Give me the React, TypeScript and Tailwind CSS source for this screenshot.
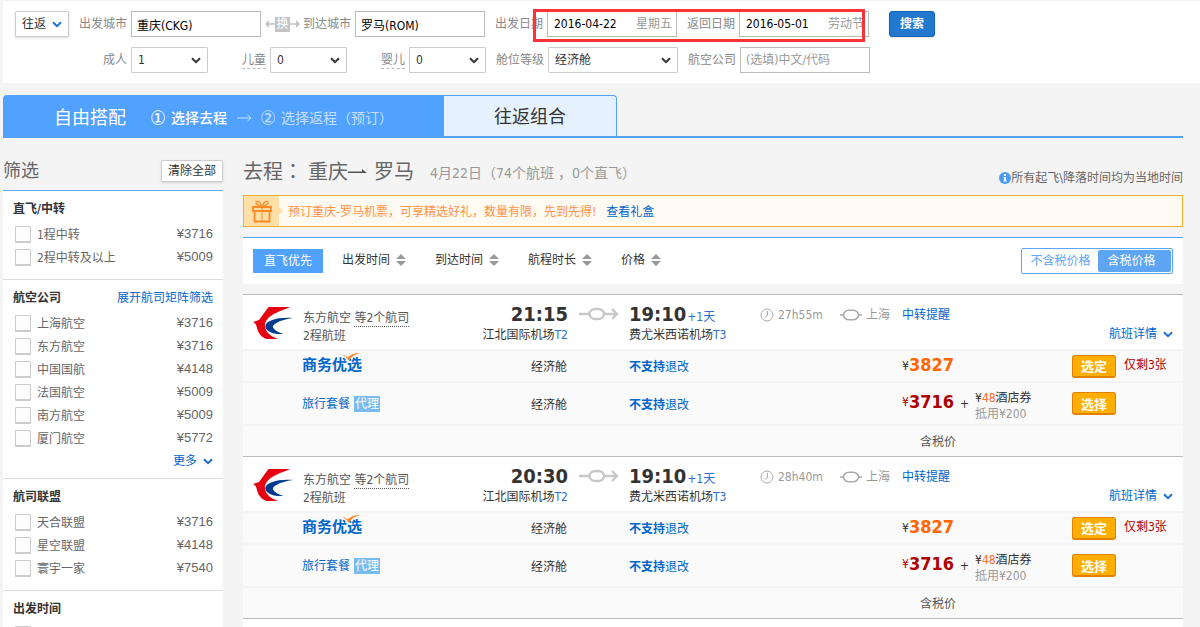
import { useState } from "react";
import type { ReactNode } from "react";

type FilterItem = { name: string; price: string };

type Flight = { id: string; depart: string; duration: string };

const STOPS: FilterItem[] = [
  { name: "1程中转", price: "¥3716" },
  { name: "2程中转及以上", price: "¥5009" },
];

const AIRLINES: FilterItem[] = [
  { name: "上海航空", price: "¥3716" },
  { name: "东方航空", price: "¥3716" },
  { name: "中国国航", price: "¥4148" },
  { name: "法国航空", price: "¥5009" },
  { name: "南方航空", price: "¥5009" },
  { name: "厦门航空", price: "¥5772" },
];

const ALLIANCES: FilterItem[] = [
  { name: "天合联盟", price: "¥3716" },
  { name: "星空联盟", price: "¥4148" },
  { name: "寰宇一家", price: "¥7540" },
];

const FLIGHTS: Flight[] = [
  { id: "a", depart: "21:15", duration: "27h55m" },
  { id: "b", depart: "20:30", duration: "28h40m" },
];

const SORTS = ["出发时间", "到达时间", "航程时长", "价格"];

function Chevron({ className }: { className: string }) {
  return (
    <svg viewBox="0 0 10 7" className={className} fill="none" stroke="currentColor" strokeWidth="2" aria-hidden="true">
      <path d="M1 1.2 5 5.2 9 1.2" />
    </svg>
  );
}

function StopIcon() {
  return (
    <svg viewBox="0 0 22 12" className="h-3 w-[22px]" fill="none" stroke="#aaa" strokeWidth="1.6" aria-hidden="true">
      <path d="M0 6h3.500M18.500 6H22" />
      <rect x="3.500" y="1.200" width="15" height="9.600" rx="5.500" ry="4.800" />
    </svg>
  );
}

function RouteArrow() {
  return (
    <svg viewBox="0 0 40 14" className="h-3.5 w-10" fill="none" stroke="#c8c8c8" strokeWidth="2.4" aria-hidden="true">
      <path d="M0 7h10.500M25 7h13M33 2l5 5-5 5" />
      <rect x="10.500" y="2" width="14.500" height="10" rx="5.800" ry="5" />
    </svg>
  );
}

function ClockIcon() {
  return (
    <svg viewBox="0 0 14 14" className="size-3.5" fill="none" stroke="#aaa" aria-hidden="true">
      <circle cx="7" cy="7" r="6" />
      <path d="M7.5 3v4.5L5 9.5" />
    </svg>
  );
}

function AirlineLogo() {
  return (
    <svg viewBox="0 0 40 32" className="h-8 w-10" aria-hidden="true">
      <path d="M15.500 0H37C33 2 28 3.500 24 5.500 18 8 13 12 12 17c-1 6 4 12 13 15H14C9 31 5 26 4 21 3 17 2 16 0 15l6-2z" fill="#e50012" />
      <path d="M40 11C32 10.500 24 11 18 13.500 12 16 11 20 14 23c4 3.500 11 4.500 16.500 4-5-1.500-9-3.500-10.500-6.500-1-3 6-7.500 20-9.500z" fill="#003b90" />
    </svg>
  );
}

function GiftIcon() {
  return (
    <svg viewBox="0 0 20 23" className="h-[23px] w-5" fill="none" stroke="#ff8a24" strokeWidth="1.8" aria-hidden="true">
      <path d="M1 7h18v4H1zM2.500 11v10.500h15V11" />
      <path d="M10 7v14" strokeWidth="1" />
      <path d="M9.500 6.500C5 5.500 3 3 4.500 1.700 6.500.4 9 3 9.500 6.500zM10.500 6.500C15 5.500 17 3 15.500 1.700 13.500.4 11 3 10.500 6.500z" strokeWidth="1.200" />
    </svg>
  );
}

function SwapButton() {
  return (
    <button type="button" className="flex w-[42px] items-center pl-1">
      <svg viewBox="0 0 10 8" className="h-2 w-2.5" aria-hidden="true">
        <path d="M10 3.200H4V0L0 4l4 4V4.800h6z" fill="#c4c4c4" />
      </svg>
      <span className="size-[15px] bg-[#c4c4c4] text-center text-xs leading-[15px] text-white">换</span>
      <svg viewBox="0 0 10 8" className="h-2 w-2.5" aria-hidden="true">
        <path d="M0 3.200h6V0l4 4-4 4V4.800H0z" fill="#c4c4c4" />
      </svg>
    </button>
  );
}

function FieldLabel({ id, wide, children }: { id: string; wide?: string; children: ReactNode }) {
  return (
    <label htmlFor={id} className={`${wide ?? "w-[62px]"} shrink-0 pr-1 text-right text-[#888]`}>
      {children}
    </label>
  );
}

function TextField({ id, value, placeholder }: { id: string; value?: string; placeholder?: string }) {
  return (
    <input
      id={id}
      defaultValue={value}
      placeholder={placeholder}
      className="h-[26px] w-[130px] border border-[#bbb] bg-white px-[5px] text-black placeholder:text-[#999]"
    />
  );
}

function DateField({ id, value, note }: { id: string; value: string; note: string }) {
  return (
    <div className="flex h-[26px] w-[130px] items-center border border-[#bbb] bg-white pr-1 pl-1.5">
      <input id={id} defaultValue={value} className="w-0 flex-1 text-black" />
      <span className="text-[#999]">{note}</span>
    </div>
  );
}

function SelectField({ id, value, wide }: { id: string; value: string; wide?: string }) {
  return (
    <div className={`relative ${wide ?? "w-[77px]"}`}>
      <select
        id={id}
        defaultValue={value}
        className="h-[26px] w-full appearance-none rounded-[1px] border border-[#ccc] bg-white px-1.5 text-[#333]"
      >
        <option>{value}</option>
      </select>
      <Chevron className="pointer-events-none absolute top-[10px] right-[7px] h-[7px] w-2.5 text-[#333]" />
    </div>
  );
}

function Checkbox({ label }: { label?: string }) {
  return (
    <input
      type="checkbox"
      aria-label={label}
      className="mr-1.5 h-[17px] w-4 appearance-none rounded-[1px] border border-b-2 border-[#ccc] bg-[#fdfdfd] checked:bg-[#51a1ff]"
    />
  );
}

function SearchPanel() {
  return (
    <form className="ml-[3px] flex flex-col gap-2.5 border-t border-[#f4f4f4] bg-white px-3 py-2.5">
      <div className="flex items-center">
        <button
          type="button"
          className="flex h-[26px] w-[54px] items-center justify-between rounded-[1px] border border-[#ccc] px-1.5 text-[#333] shadow-sm"
        >
          往返
          <Chevron className="h-[7px] w-2.5 text-[#1e70cd]" />
        </button>
        <FieldLabel id="from">出发城市</FieldLabel>
        <TextField id="from" value="重庆(CKG)" />
        <SwapButton />
        <FieldLabel id="to" wide="w-[52px]">到达城市</FieldLabel>
        <TextField id="to" value="罗马(ROM)" />
        <div className="relative flex items-center">
          <FieldLabel id="go">出发日期</FieldLabel>
          <DateField id="go" value="2016-04-22" note="星期五" />
          <FieldLabel id="back">返回日期</FieldLabel>
          <DateField id="back" value="2016-05-01" note="劳动节" />
          <div className="pointer-events-none absolute -top-0.5 left-12 h-[33px] w-[332px] border-3 border-[#fb3236]" />
        </div>
        <button
          type="submit"
          className="ml-5 h-[26px] w-[46px] rounded-[3px] border border-[#1460b4] bg-[#2277cf] font-bold text-white shadow-sm"
        >
          搜索
        </button>
      </div>
      <div className="flex items-center">
        <FieldLabel id="adult" wide="w-[116px]">成人</FieldLabel>
        <SelectField id="adult" value="1" />
        <FieldLabel id="child">
          <span className="inline-block border-b border-dashed border-[#bbb]">儿童</span>
        </FieldLabel>
        <SelectField id="child" value="0" />
        <FieldLabel id="infant">
          <span className="inline-block border-b border-dashed border-[#bbb]">婴儿</span>
        </FieldLabel>
        <SelectField id="infant" value="0" />
        <FieldLabel id="cabin">舱位等级</FieldLabel>
        <SelectField id="cabin" value="经济舱" wide="w-[130px]" />
        <FieldLabel id="carrier">航空公司</FieldLabel>
        <TextField id="carrier" placeholder="(选填)中文/代码" />
      </div>
    </form>
  );
}

function Tabs() {
  return (
    <nav className="mt-3 flex h-[43px] border-b-2 border-[#51a1ff]">
      <a href="#free" className="flex w-[441px] items-center rounded-tl-sm bg-[#51a1ff] pt-1 pl-[51px] text-sm text-white">
        <span className="text-lg">自由搭配</span>
        <span className="ml-6 flex items-center">
          <span className="w-[21px] text-xl leading-5">①</span>
          <span className="font-medium">选择去程</span>
        </span>
        <svg viewBox="0 0 15 8" className="ml-2.5 h-2 w-[15px]" fill="none" stroke="#c5e0ff" aria-hidden="true">
          <path d="M0 4h14M10.500 1l3.500 3-3.500 3" />
        </svg>
        <span className="ml-2 flex items-center whitespace-nowrap text-[#c5e0ff]">
          <span className="w-[21px] text-xl leading-5">②</span>选择返程（预订）
        </span>
      </a>
      <a
        href="#combo"
        className="flex w-[173px] items-center justify-center rounded-tr-sm border-t border-r border-[#51a1ff] bg-[#e6f1ff] pt-0.5 text-lg text-[#333]"
      >
        往返组合
      </a>
    </nav>
  );
}

function FilterSection({
  title,
  items,
  action,
  children,
  bottom,
}: {
  title: string;
  items: FilterItem[];
  action?: ReactNode;
  children?: ReactNode;
  bottom?: string;
}) {
  return (
    <section className={`border-b border-[#ddd] px-2.5 ${bottom ?? "pb-2.5"}`}>
      <div className="flex items-center justify-between pt-2 pb-1 leading-5">
        <h3 className="font-bold text-[#333]">{title}</h3>
        {action}
      </div>
      {items.map((item) => (
        <label key={item.name} className="flex h-[23px] items-center pl-0.5 text-[#666]">
          <Checkbox />
          {item.name}
          <span className="ml-auto pb-0.5 font-[Liberation_Sans] text-[13px]">{item.price}</span>
        </label>
      ))}
      {children}
    </section>
  );
}

function Sidebar() {
  return (
    <aside className="w-[220px] shrink-0">
      <div className="flex h-[53px] items-center justify-between border-b border-[#6aa9f8] pt-3.5 text-[#666]">
        <h2 className="text-lg">筛选</h2>
        <button type="button" className="h-[22px] w-[62px] rounded-[1px] border border-[#ccc] bg-white text-[#333] shadow-sm">
          清除全部
        </button>
      </div>
      <div className="bg-white">
        <FilterSection title="直飞/中转" items={STOPS} />
        <FilterSection
          title="航空公司"
          items={AIRLINES}
          bottom="pb-1.5"
          action={<a href="#matrix" className="text-[#06c]">展开航司矩阵筛选</a>}
        >
          <a href="#more" className="flex h-[22px] items-center justify-end gap-1.5 text-[#06c]">
            更多
            <Chevron className="h-[7px] w-2.5 text-[#1e70cd]" />
          </a>
        </FilterSection>
        <FilterSection title="航司联盟" items={ALLIANCES} />
        <FilterSection title="出发时间" items={[]}>
          <div className="flex h-[23px] items-center pl-0.5">
            <Checkbox label="出发时间" />
          </div>
        </FilterSection>
      </div>
    </aside>
  );
}

function ResultHeader() {
  return (
    <div className="flex h-[57px] items-center pt-2.5 text-[#666]">
      <h1 className="flex items-center text-xl whitespace-nowrap">
        <span className="w-[65px]">
          去程<span className="font-['Noto_Sans_CJK_TC',sans-serif]">：</span>
        </span>
        重庆
        <svg viewBox="0 0 20 8" className="h-2 w-5" aria-hidden="true">
          <path d="M0 3.500h14V1l5 4H0z" fill="#555" />
        </svg>
        <span className="ml-1.5">罗马</span>
      </h1>
      <p className="ml-4 pt-0.5 text-sm text-[#999]">4月22日（74个航班 ，0个直飞）</p>
      <p className="ml-auto flex items-center pt-3">
        <svg viewBox="0 0 12 12" className="size-3" aria-hidden="true">
          <circle cx="6" cy="6" r="6" fill="#4a9cf0" />
          <path d="M5 2h2v2H5zM4.500 5H7v3.500h.8v1H4.300v-1H5V6h-.5z" fill="#fff" />
        </svg>
        所有起飞\降落时间均为当地时间
      </p>
    </div>
  );
}

function GiftBanner() {
  return (
    <div className="flex h-8 items-center border border-[#fbb02e] bg-[#fffaf2] text-[#ff9245]">
      <span className="grid h-full w-[35px] place-items-center bg-[#ffdfa8]">
        <GiftIcon />
      </span>
      <svg viewBox="0 0 4 8" className="h-2 w-1" aria-hidden="true">
        <path d="M0 0l4 4-4 4z" fill="#ffdfa8" />
      </svg>
      <p className="pt-0.5 pl-[5px]">
        预订重庆-罗马机票，可享精选好礼，数量有限，先到先得!
        <a href="#gift" className="ml-2.5 text-[#06c]">查看礼盒</a>
      </p>
    </div>
  );
}

function SortBar() {
  const [taxed, setTaxed] = useState(true);
  return (
    <div className="mt-2.5 flex h-[47px] items-center border-t border-[#51a1ff] bg-white px-2.5">
      <button type="button" className="mr-[19px] h-6 w-[70px] bg-[#51a1ff] text-white">直飞优先</button>
      <div className="flex gap-[29px] pb-0.5">
        {SORTS.map((name) => (
          <button key={name} type="button" className="flex items-center gap-1.5 text-[#333]">
            {name}
            <svg viewBox="0 0 10 12" className="h-3 w-2.5" fill="#999" aria-hidden="true">
              <path d="M5 0l5 5H0zM5 12l5-5H0z" />
            </svg>
          </button>
        ))}
      </div>
      <div className="ml-auto flex h-[26px] w-[152px] rounded-xs border border-[#5ea5f3] p-px">
        <button
          type="button"
          onClick={() => setTaxed(false)}
          className={taxed ? "flex-1 text-[#5ea5f3]" : "flex-1 rounded-xs bg-[#5ea5f3] text-white"}
        >
          不含税价格
        </button>
        <button
          type="button"
          onClick={() => setTaxed(true)}
          className={taxed ? "w-[73px] rounded-xs bg-[#5ea5f3] pr-1.5 text-white" : "w-[73px] pr-1.5 text-[#5ea5f3]"}
        >
          含税价格
        </button>
      </div>
    </div>
  );
}

function FareRow({
  name,
  tall,
  price,
  action,
}: {
  name: ReactNode;
  tall?: boolean;
  price: ReactNode;
  action: ReactNode;
}) {
  return (
    <div
      className={`${tall ? "h-[43px]" : "h-8"} grid grid-cols-[59px_176px_89px_62px_273px_1fr_111px] items-center border-t-2 border-[#f4f4f4] bg-[#fafafa]`}
    >
      <div className="col-start-2 flex items-center">{name}</div>
      <span className="pt-0.5 text-right text-[#333]">经济舱</span>
      <a href="#rules" className="col-start-5 pt-0.5 text-[#06c]">
        <b>不支持</b>退改
      </a>
      <div className="flex items-center">{price}</div>
      <div className="flex items-center gap-2">{action}</div>
    </div>
  );
}

function PickButton({ children }: { children: ReactNode }) {
  return (
    <button
      type="button"
      className="h-[23px] w-11 rounded-[3px] border border-b-2 border-[#e38100] bg-[#ffae00] pt-0.5 text-[13px] leading-none font-bold text-white"
    >
      {children}
    </button>
  );
}

function FlightCard({ flight }: { flight: Flight }) {
  return (
    <article className="border-t border-[#bbb]">
      <div className="grid h-[54px] grid-cols-[60px_175px_90px_61px_131px_80px_62px_1fr_74px] bg-white text-[#333]">
        <div className="pt-3 pl-2.5">
          <AirlineLogo />
        </div>
        <div className="pt-3.5 text-[#555]">
          <p className="leading-[18px]">
            东方航空 <span className="inline-block border-b border-dotted border-[#555] leading-4">等2个航司</span>
          </p>
          <p className="leading-[18px]">2程航班</p>
        </div>
        <div className="pt-2 text-right whitespace-nowrap">
          <p className="text-xl leading-[22px] font-bold">{flight.depart}</p>
          <p className="leading-5">
            江北国际机场<span className="text-[#2d6fcb]">T2</span>
          </p>
        </div>
        <div className="flex justify-center pt-3">
          <RouteArrow />
        </div>
        <div className="pt-2 whitespace-nowrap">
          <p className="flex items-baseline">
            <span className="text-xl leading-[22px] font-bold">19:10</span>
            <span className="ml-px text-[#2d6fcb]">+1天</span>
          </p>
          <p className="leading-5">
            费尤米西诺机场<span className="text-[#2d6fcb]">T3</span>
          </p>
        </div>
        <p className="flex h-5 items-center gap-1 pt-5 text-[#999]">
          <ClockIcon />
          {flight.duration}
        </p>
        <p className="flex h-5 items-center gap-1 pt-5 text-[#999]">
          <StopIcon />
          上海
        </p>
        <p className="flex h-5 items-center pt-5">
          <a href="#transfer" className="text-[#06c]">中转提醒</a>
        </p>
        <a href="#detail" className="flex items-center gap-1.5 pt-6 text-[#06c]">
          航班详情
          <Chevron className="h-[7px] w-2.5 text-[#1e70cd]" />
        </a>
      </div>
      <FareRow
        name={
          <span className="relative pb-0.5 text-[15px] leading-5 font-bold text-[#06c]">
            商务优选
            <svg viewBox="0 0 18 8" className="absolute -top-0.5 right-0.5 h-2 w-[18px]" aria-hidden="true">
              <path d="M0 1.500c3 .5 4 1.500 5.500 3C8 2 12 0 18 0 12 2 9 4 7 8 5 6 3 3 0 1.500z" fill="#ff8c2b" />
            </svg>
          </span>
        }
        price={
          <>
            <span className="text-[#333]">¥</span>
            <b className="pb-0.5 text-lg leading-6 text-[#f60]">3827</b>
          </>
        }
        action={
          <>
            <PickButton>选定</PickButton>
            <span className="pb-0.5 text-[#b00000]">仅剩3张</span>
          </>
        }
      />
      <FareRow
        tall
        name={
          <>
            <a href="#package" className="text-[#06c]">旅行套餐</a>
            <span className="ml-1 h-4 w-[26px] bg-[#78bbee] text-center leading-4 text-white">代理</span>
          </>
        }
        price={
          <>
            <span className="pb-1 text-[#b00000]">¥</span>
            <b className="pb-1 text-lg leading-6 text-[#b00000]">3716</b>
            <span className="mx-1.5 text-[#333]">+</span>
            <span className="pt-1 leading-4 text-[#333]">
              ¥<span className="text-[#ff6b1a]">48</span>酒店券
              <br />
              <span className="text-[#999]">抵用¥200</span>
            </span>
          </>
        }
        action={<PickButton>选择</PickButton>}
      />
      <p className="h-8 border-t-2 border-[#f4f4f4] bg-[#fafafa] pr-[227px] text-right leading-8 text-[#555]">含税价</p>
    </article>
  );
}

export default function App() {
  return (
    <div className="h-screen overflow-hidden bg-[#f4f4f4] font-['DejaVu_Sans_Condensed','Noto_Sans','Noto_Sans_CJK_SC',sans-serif] text-xs">
      <SearchPanel />
      <main className="pr-[17px] pl-[3px]">
        <Tabs />
        <div className="flex gap-5">
          <Sidebar />
          <div className="min-w-0 flex-1">
            <ResultHeader />
            <GiftBanner />
            <SortBar />
            <div className="mt-2.5 border-b border-[#bbb]">
              {FLIGHTS.map((flight) => (
                <FlightCard key={flight.id} flight={flight} />
              ))}
            </div>
            <div className="h-14 bg-white" />
          </div>
        </div>
      </main>
    </div>
  );
}
